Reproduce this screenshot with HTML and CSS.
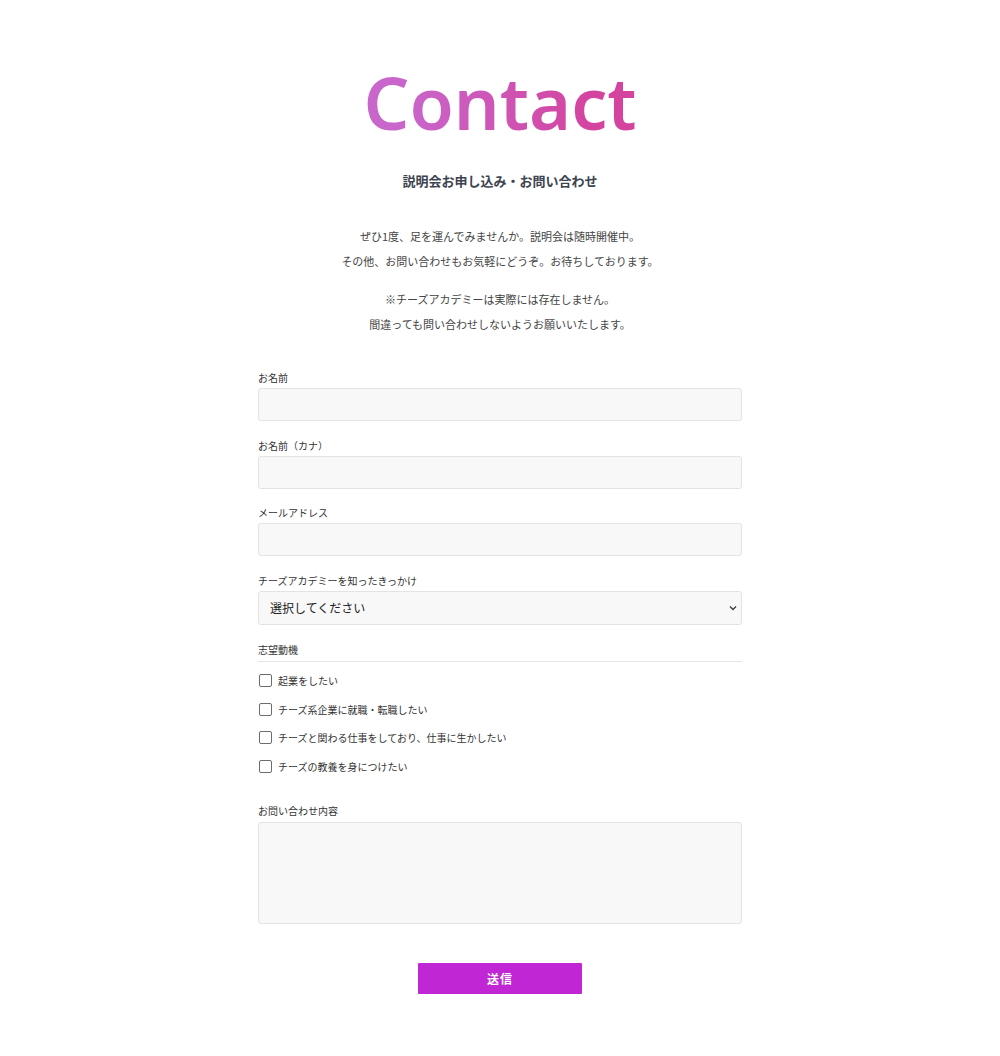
FILE: index.html
```html
<!DOCTYPE html>
<html lang="ja">
<head>
<meta charset="utf-8">
<title>Contact</title>
<link rel="stylesheet" href="styles.css">
</head>
<body>
<main class="page">
  <h1 class="title">Contact</h1>
  <h2 class="subtitle">説明会お申し込み・お問い合わせ</h2>
  <div class="intro">
    <p>ぜひ1度、足を運んでみませんか。説明会は随時開催中。<br>その他、お問い合わせもお気軽にどうぞ。お待ちしております。</p>
    <p>※チーズアカデミーは実際には存在しません。<br>間違っても問い合わせしないようお願いいたします。</p>
  </div>
  <form class="form">
    <div class="field">
      <label class="label">お名前</label>
      <input class="input" type="text">
    </div>
    <div class="field">
      <label class="label">お名前（カナ）</label>
      <input class="input" type="text">
    </div>
    <div class="field">
      <label class="label">メールアドレス</label>
      <input class="input" type="text">
    </div>
    <div class="field">
      <label class="label">チーズアカデミーを知ったきっかけ</label>
      <div class="select-wrap">
        <select class="select"><option>選択してください</option></select>
        <svg class="chev" width="8" height="6" viewBox="0 0 8 6"><path d="M1 1.5 L4 4.5 L7 1.5" fill="none" stroke="#3a3f4b" stroke-width="1.4"/></svg>
      </div>
    </div>
    <div class="group">
      <div class="group-label">志望動機</div>
      <label class="check"><span class="box"></span>起業をしたい</label>
      <label class="check"><span class="box"></span>チーズ系企業に就職・転職したい</label>
      <label class="check"><span class="box"></span>チーズと関わる仕事をしており、仕事に生かしたい</label>
      <label class="check"><span class="box"></span>チーズの教養を身につけたい</label>
    </div>
    <div class="field">
      <label class="label">お問い合わせ内容</label>
      <textarea class="textarea"></textarea>
    </div>
    <div class="actions">
      <button class="submit" type="button">送信</button>
    </div>
  </form>
</main>
</body>
</html>
```

FILE: styles.css
```css
* { box-sizing: border-box; }
body {
  margin: 0;
  background: #fff;
  font-family: "Noto Sans CJK JP", "Noto Sans", sans-serif;
  color: #444;
}
.page {
  width: 484px;
  margin: 0 auto;
  padding-top: 53px;
  padding-bottom: 62px;
}
.title {
  margin: 0;
  text-align: center;
  font-family: "Noto Sans", "Open Sans", sans-serif;
  font-weight: 600;
  font-size: 72px;
  line-height: normal;
  height: 98px;
  background: linear-gradient(90deg, #c866cb 30%, #d4439e 70%);
  -webkit-background-clip: text;
  background-clip: text;
  color: transparent;
}
.subtitle {
  margin: 20px 0 0;
  text-align: center;
  font-size: 13px;
  font-weight: 700;
  line-height: 20px;
  color: #3d4350;
}
.intro {
  margin-top: 33px;
  text-align: center;
  font-size: 11px;
  line-height: 25px;
  color: #444;
}
.intro p { margin: 0 0 13px; }
.intro p:last-child { margin-bottom: 0; }
.form {
  margin-top: 33px;
  display: flex;
  flex-direction: column;
  gap: 16.67px;
}
.field { display: flex; flex-direction: column; }
.label, .group-label {
  font-size: 10px;
  line-height: 16px;
  color: #333;
  margin-bottom: 2px;
}
.input, .select, .textarea {
  width: 100%;
  height: 33px;
  background: #f8f8f8;
  border: 1px solid #e3e3e3;
  border-radius: 3px;
  font-family: inherit;
  margin: 0;
}
.select-wrap { position: relative; }
.select {
  height: 34px;
  -webkit-appearance: none;
  appearance: none;
  padding: 0 11px;
  font-size: 12px;
  color: #222;
}
.chev { position: absolute; right: 5px; top: 14px; }
.textarea {
  height: 102px;
  resize: none;
  margin-top: 1px;
}
.group { display: flex; flex-direction: column; }
.group-label {
  margin-bottom: 5px;
  padding-bottom: 3px;
  border-bottom: 1px solid #e5e5e5;
}
.check {
  height: 28.5px;
  display: flex;
  align-items: center;
  gap: 6px;
  font-size: 10px;
  color: #333;
}
.box {
  width: 13px;
  height: 13px;
  margin-left: 1px;
  border: 1.5px solid #6b6b73;
  border-radius: 2px;
  background: #fff;
}
.group + .field { margin-top: 6px; }
.actions {
  display: flex;
  justify-content: center;
  margin-top: 22px;
}
.submit {
  width: 164px;
  height: 31px;
  background: #c026d3;
  color: #fff;
  border: none;
  border-radius: 1px;
  font-family: inherit;
  font-size: 12px;
  font-weight: 700;
  letter-spacing: 1px;
}
```
